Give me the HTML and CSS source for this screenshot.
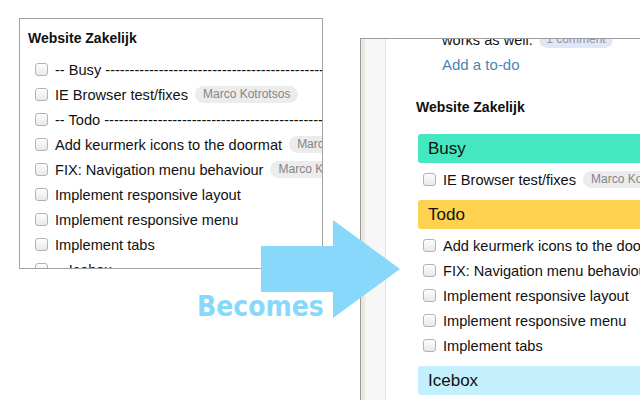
FILE: index.html
```html
<!DOCTYPE html>
<html lang="nl">
<head>
<meta charset="utf-8">
<title>Website Zakelijk - Becomes</title>
<link rel="stylesheet" href="styles.css">
</head>
<body>
<div class="canvas">
  <section class="shot shot-old">
    <h2 class="list-title">Website Zakelijk</h2>
    <ul class="todos">
      <li class="todo"><span class="cb"></span><span class="txt">-- Busy ----------------------------------------------------------------------</span></li>
      <li class="todo"><span class="cb"></span><span class="txt">IE Browser test/fixes</span><span class="pill">Marco Kotrotsos</span></li>
      <li class="todo"><span class="cb"></span><span class="txt">-- Todo ----------------------------------------------------------------------</span></li>
      <li class="todo"><span class="cb"></span><span class="txt">Add keurmerk icons to the doormat</span><span class="pill">Marco Kotrotsos</span></li>
      <li class="todo"><span class="cb"></span><span class="txt">FIX: Navigation menu behaviour</span><span class="pill">Marco Kotrotsos</span></li>
      <li class="todo"><span class="cb"></span><span class="txt">Implement responsive layout</span></li>
      <li class="todo"><span class="cb"></span><span class="txt">Implement responsive menu</span></li>
      <li class="todo"><span class="cb"></span><span class="txt">Implement tabs</span></li>
      <li class="todo"><span class="cb"></span><span class="txt">-- Icebox --------------------------------------------------------------------</span></li>
    </ul>
  </section>

  <section class="shot shot-new">
    <div class="sidebar"></div>
    <div class="content">
      <div class="wrapline"><span class="txt">works as well.</span><span class="pill pill-comment">1 comment</span></div>
      <div class="add-line"><a class="add-link">Add a to-do</a></div>
      <h2 class="list-title list-title-new">Website Zakelijk</h2>
      <div class="group group-busy">Busy</div>
      <ul class="todos">
        <li class="todo"><span class="cb"></span><span class="txt">IE Browser test/fixes</span><span class="pill">Marco Kotrotsos</span></li>
      </ul>
      <div class="group group-todo">Todo</div>
      <ul class="todos">
        <li class="todo"><span class="cb"></span><span class="txt">Add keurmerk icons to the doormat</span><span class="pill">Marco Kotrotsos</span></li>
        <li class="todo"><span class="cb"></span><span class="txt">FIX: Navigation menu behaviour</span><span class="pill">Marco Kotrotsos</span></li>
        <li class="todo"><span class="cb"></span><span class="txt">Implement responsive layout</span></li>
        <li class="todo"><span class="cb"></span><span class="txt">Implement responsive menu</span></li>
        <li class="todo"><span class="cb"></span><span class="txt">Implement tabs</span></li>
      </ul>
      <div class="group group-icebox">Icebox</div>
    </div>
  </section>

  <svg class="arrow" width="640" height="400" viewBox="0 0 640 400" aria-hidden="true">
    <polygon points="261,246 333,246 333,220 400,269 333,318 333,292 261,292" fill="#88d8fc"/>
  </svg>
  <div class="becomes">Becomes</div>
</div>
</body>
</html>
```

FILE: styles.css
```css
* { box-sizing: border-box; }

html, body {
  margin: 0;
  padding: 0;
  background: #ffffff;
}

body {
  font-family: "Liberation Sans", Arial, sans-serif;
  color: #111111;
}

.canvas {
  position: relative;
  width: 640px;
  height: 400px;
  overflow: hidden;
  background: #ffffff;
}

/* screenshot frames placed on the canvas */
.shot {
  position: absolute;
  background: #ffffff;
  overflow: hidden;
}

.shot-old {
  left: 19px;
  top: 18px;
  width: 304px;
  height: 251px;
  border: 1px solid #a2a2a2;
  padding: 9px 0 0 8px;
}

.shot-new {
  left: 360px;
  top: 38px;
  width: 320px;
  height: 380px;
  border-top: 1px solid #9c9c9c;
  border-left: 1px solid #9c9c9c;
  display: flex;
}

.sidebar {
  flex: 0 0 25px;
  background: linear-gradient(to right, #ebe5d6 0, #efebe2 4px, #f6f6f6 4px, #f7f7f7 24px, #e4e4e4 24px, #e4e4e4 25px);
}

.content {
  flex: 1;
  padding-left: 30px;
  white-space: nowrap;
}

.list-title {
  margin: 0 0 9px;
  font-size: 14px;
  line-height: 20px;
  font-weight: 700;
  color: #111111;
}

.list-title-new {
  margin: 20px 0 17px;
}

.todos {
  list-style: none;
  margin: 0;
  padding: 0;
}

.todo {
  display: flex;
  align-items: center;
  height: 25px;
  padding-left: 7px;
  white-space: nowrap;
  font-size: 14.6px;
}

.cb {
  flex: 0 0 13px;
  width: 13px;
  height: 13px;
  margin-right: 7px;
  border: 1px solid #b3b3b3;
  border-radius: 3px;
  background: linear-gradient(#fdfdfd, #e9e9e9);
  box-shadow: inset 0 1px 0 #ffffff;
}

.txt {
  flex: 0 0 auto;
}

.pill {
  flex: 0 0 auto;
  display: inline-block;
  margin-left: 7px;
  height: 17px;
  line-height: 17px;
  padding: 0 8px;
  border-radius: 9px;
  background: #ececec;
  color: #858585;
  font-size: 12px;
}

/* top of the new screenshot (clipped item) */
.wrapline {
  display: flex;
  align-items: center;
  height: 25px;
  margin-top: -12px;
  padding-left: 26px;
  font-size: 14.6px;
}

.pill-comment {
  margin-left: 6px;
  padding: 0 7.5px;
  background: #e2e7f6;
  color: #8c95a5;
}

.add-line {
  height: 25px;
  line-height: 25px;
  padding-left: 26px;
  font-size: 15px;
}

.add-link {
  color: #4b86b5;
  text-decoration: none;
}

/* coloured group headers */
.group {
  height: 29px;
  line-height: 29px;
  margin: 8px 0 4px 2px;
  padding-left: 10px;
  border-radius: 3px;
  font-size: 17px;
  color: #111111;
}

.group-busy { background: #44e7bf; }
.group-todo { background: #fed24e; }
.group-icebox { background: #c4effc; }

/* overlay: arrow + caption */
.arrow {
  position: absolute;
  left: 0;
  top: 0;
  pointer-events: none;
}

.becomes {
  position: absolute;
  left: 197px;
  top: 293px;
  font-family: "DejaVu Sans Condensed", "DejaVu Sans", sans-serif;
  font-stretch: condensed;
  font-weight: 700;
  font-size: 28px;
  line-height: 28px;
  color: #88d8fc;
  white-space: nowrap;
}
```
